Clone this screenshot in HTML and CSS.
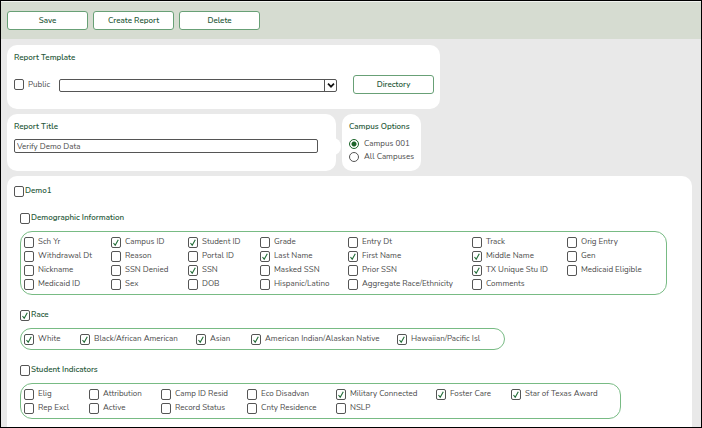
FILE: index.html
```
<!DOCTYPE html>
<html lang="en">
<head>
    <meta charset="UTF-8">
    <meta name="viewport" content="width=device-width, initial-scale=1.0">
    <title>Create Report</title>
    <link rel="stylesheet" href="styles.css">
</head>
<body>
    <div class="page">
        <header class="toolbar">
            <button type="button" class="btn">Save</button>
            <button type="button" class="btn">Create Report</button>
            <button type="button" class="btn">Delete</button>
        </header>

        <main class="content">
            <section class="card template">
                <h2>Report Template</h2>
                <div class="template-row">
                    <label class="option"><input type="checkbox">Public</label>
                    <div class="select-wrap">
                        <select aria-label="Report Template">
                            <option></option>
                        </select>
                        <span class="arrow">
                            <svg viewBox="0 0 10 10"><path d="M2.5 3.5 L5 6 L7.5 3.5"/></svg>
                        </span>
                    </div>
                    <button type="button" class="btn">Directory</button>
                </div>
            </section>

            <div class="card-row">
                <section class="card title-card">
                    <h2><label for="title">Report Title</label></h2>
                    <input type="text" id="title" value="Verify Demo Data">
                </section>
                <section class="card campus">
                    <h2>Campus Options</h2>
                    <label class="option"><input type="radio" name="campus" checked>Campus 001</label>
                    <label class="option"><input type="radio" name="campus">All Campuses</label>
                </section>
            </div>

            <section class="card fields">
                <label class="heading"><input type="checkbox">Demo1</label>

                <div class="group">
                    <label class="heading"><input type="checkbox">Demographic Information</label>
                    <div class="options demographic">
                        <label class="option"><input type="checkbox">Sch Yr</label>
                        <label class="option"><input type="checkbox" checked>Campus ID</label>
                        <label class="option"><input type="checkbox" checked>Student ID</label>
                        <label class="option"><input type="checkbox">Grade</label>
                        <label class="option"><input type="checkbox">Entry Dt</label>
                        <label class="option"><input type="checkbox">Track</label>
                        <label class="option"><input type="checkbox">Orig Entry</label>

                        <label class="option"><input type="checkbox">Withdrawal Dt</label>
                        <label class="option"><input type="checkbox">Reason</label>
                        <label class="option"><input type="checkbox">Portal ID</label>
                        <label class="option"><input type="checkbox" checked>Last Name</label>
                        <label class="option"><input type="checkbox" checked>First Name</label>
                        <label class="option"><input type="checkbox" checked>Middle Name</label>
                        <label class="option"><input type="checkbox">Gen</label>

                        <label class="option"><input type="checkbox">Nickname</label>
                        <label class="option"><input type="checkbox">SSN Denied</label>
                        <label class="option"><input type="checkbox" checked>SSN</label>
                        <label class="option"><input type="checkbox">Masked SSN</label>
                        <label class="option"><input type="checkbox">Prior SSN</label>
                        <label class="option"><input type="checkbox" checked>TX Unique Stu ID</label>
                        <label class="option"><input type="checkbox">Medicaid Eligible</label>

                        <label class="option"><input type="checkbox">Medicaid ID</label>
                        <label class="option"><input type="checkbox">Sex</label>
                        <label class="option"><input type="checkbox">DOB</label>
                        <label class="option"><input type="checkbox">Hispanic/Latino</label>
                        <label class="option"><input type="checkbox">Aggregate Race/Ethnicity</label>
                        <label class="option"><input type="checkbox">Comments</label>
                    </div>
                </div>

                <div class="group">
                    <label class="heading"><input type="checkbox" checked>Race</label>
                    <div class="options race">
                        <label class="option"><input type="checkbox" checked>White</label>
                        <label class="option"><input type="checkbox" checked>Black/African American</label>
                        <label class="option"><input type="checkbox" checked>Asian</label>
                        <label class="option"><input type="checkbox" checked>American Indian/Alaskan Native</label>
                        <label class="option"><input type="checkbox" checked>Hawaiian/Pacific Isl</label>
                    </div>
                </div>

                <div class="group">
                    <label class="heading"><input type="checkbox">Student Indicators</label>
                    <div class="options indicators">
                        <label class="option"><input type="checkbox">Elig</label>
                        <label class="option"><input type="checkbox">Attribution</label>
                        <label class="option"><input type="checkbox">Camp ID Resid</label>
                        <label class="option"><input type="checkbox">Eco Disadvan</label>
                        <label class="option"><input type="checkbox" checked>Military Connected</label>
                        <label class="option"><input type="checkbox" checked>Foster Care</label>
                        <label class="option"><input type="checkbox" checked>Star of Texas Award</label>

                        <label class="option"><input type="checkbox">Rep Excl</label>
                        <label class="option"><input type="checkbox">Active</label>
                        <label class="option"><input type="checkbox">Record Status</label>
                        <label class="option"><input type="checkbox">Cnty Residence</label>
                        <label class="option"><input type="checkbox">NSLP</label>
                    </div>
                </div>
            </section>
        </main>
    </div>
</body>
</html>
```
FILE: styles.css
```
* {
    box-sizing: border-box;
}

body {
    margin: 0;
    font-family: Nunito, Lato, sans-serif;
    font-size: 8px;
    line-height: 14px;
    color: #4a4a4a;
}

.page {
    display: flex;
    flex-direction: column;
    min-height: 100vh;
    border: 1px solid #000;
    background: #e9e9e9;
}

.toolbar {
    display: flex;
    gap: 5px;
    padding: 9px 6px;
    border-top: 1px solid #f1f3ef;
    background: #d6dcd1;
}

.btn {
    width: 81px;
    height: 19px;
    padding: 0;
    border: 1px solid #68a076;
    border-radius: 3px;
    background: #fff;
    color: #28593a;
    font: inherit;
    font-weight: 600;
    line-height: 16px;
    cursor: pointer;
}

.content {
    display: flex;
    flex: 1;
    flex-direction: column;
    align-items: flex-start;
    gap: 5px;
    padding: 6px 9px 0 6px;
}

.card {
    padding: 6px 7px 5px;
    border-radius: 10px;
    background: #fff;
}

h2,
.heading {
    margin: 0;
    color: #28593a;
    font-size: 8px;
    font-weight: 600;
}

.option,
.heading {
    display: flex;
    align-items: center;
    gap: 4px;
    white-space: nowrap;
}

.heading {
    gap: 1px;
}

/* Check boxes and radio buttons */
input[type="checkbox"],
input[type="radio"] {
    appearance: none;
    flex: none;
    width: 10px;
    height: 11px;
    margin: 0;
    border: 1px solid #555;
    border-radius: 2px;
    background: #fff;
}

input[type="checkbox"]:checked {
    background: #fff url("data:image/svg+xml,%3Csvg xmlns='http://www.w3.org/2000/svg' viewBox='0 0 8 9'%3E%3Cpath d='M1.5 5 L3.2 7.3 L6.3 1.8' fill='none' stroke='%231f6b35' stroke-width='1.1'/%3E%3C/svg%3E") center / 8px 9px no-repeat;
}

input[type="radio"] {
    width: 10px;
    height: 10px;
    border-radius: 50%;
}

input[type="radio"]:checked {
    border-color: #1b6429;
    background: radial-gradient(circle, #1b6429 2px, #fff 3px);
}

/* Report template */
.template {
    width: 433px;
    height: 64px;
}

.template-row {
    display: flex;
    align-items: center;
    margin-top: 10px;
}

.select-wrap {
    position: relative;
    flex: 1;
    margin: 2px 16px 0 9px;
    height: 13px;
}

select {
    display: block;
    appearance: none;
    width: 100%;
    height: 13px;
    padding: 0 16px 0 2px;
    border: 1px solid #555;
    border-radius: 2px;
    background: #fff;
    font: inherit;
}

.arrow {
    position: absolute;
    top: 0;
    right: 0;
    width: 13px;
    height: 13px;
    border-left: 1px solid #555;
    pointer-events: none;
}

.arrow svg {
    display: block;
    width: 12px;
    height: 13px;
    fill: none;
    stroke: #111;
    stroke-width: 1.4;
}

.template .btn {
    margin-right: -1px;
}

/* Title and campus */
.card-row {
    display: flex;
    gap: 6px;
}

.title-card {
    position: relative;
    width: 329px;
    height: 57px;
}

.title-card::after {
    content: "";
    position: absolute;
    top: 24px;
    right: -5px;
    width: 16px;
    height: 17px;
    border-radius: 8px;
    background: #fff;
}

.title-card input {
    display: block;
    width: 304px;
    height: 14px;
    margin-top: 5px;
    padding: 0 2px;
    border: 1px solid #555;
    border-radius: 2px;
    color: inherit;
    font: inherit;
    line-height: 12px;
}

.campus {
    width: 79px;
}

.campus h2 {
    margin-bottom: 3px;
}

.campus .option {
    gap: 5px;
    height: 13px;
}

/* Report fields */
.fields {
    flex: 1;
    align-self: stretch;
    padding: 8px 7px;
    border-radius: 10px 10px 0 0;
}

.group {
    margin: 13px 0 0 6px;
}

.options {
    display: grid;
    width: max-content;
    margin-top: 6px;
    padding: 3px;
    border: 1px solid #78bb84;
    border-radius: 12px;
}

.demographic {
    grid-template-columns: 87px 77px 72px 88px 124px 95px 96px;
}

.race {
    grid-template-columns: 56px 116px 55px 146px 104px;
}

.indicators {
    grid-template-columns: 65px 72px 86px 89px 100px 75px 106px;
}
```
